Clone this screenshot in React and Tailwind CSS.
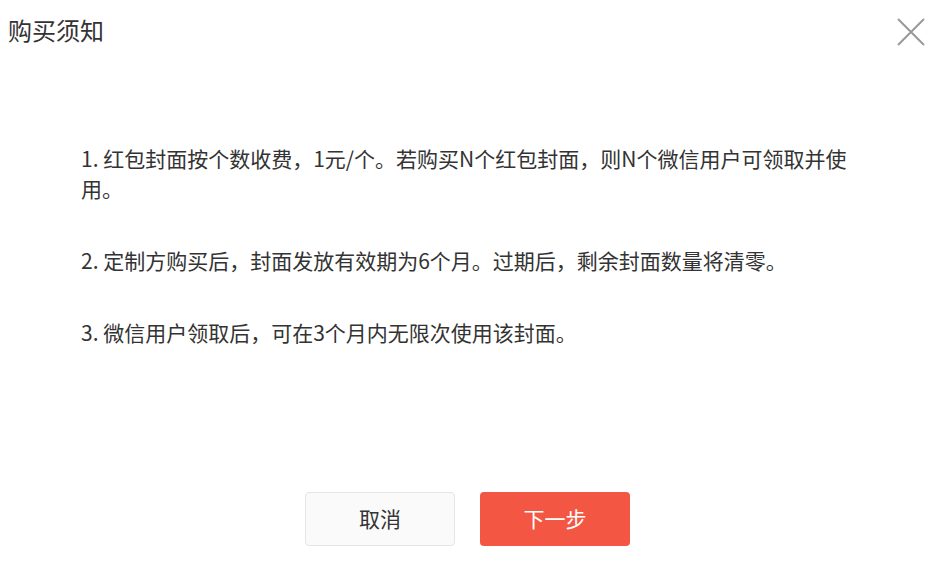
import React from 'react';

const items = [
    '1. 红包封面按个数收费，1元/个。若购买N个红包封面，则N个微信用户可领取并使用。',
    '2. 定制方购买后，封面发放有效期为6个月。过期后，剩余封面数量将清零。',
    '3. 微信用户领取后，可在3个月内无限次使用该封面。',
];

const CloseIcon = () => (
    <svg width="28" height="28" viewBox="0 0 28 28" fill="none">
        <path d="M1 1L27 27M27 1L1 27" stroke="#999999" strokeWidth="2" />
    </svg>
);

const App = () => {
    return (
        <div
            className="w-[952px] h-[567px] bg-white flex flex-col text-[#333333] overflow-hidden"
            style={{ fontFamily: '"Noto Sans CJK SC", "Noto Sans", sans-serif' }}
        >
            <div className="flex justify-between items-center pl-[8px] pr-[27px] pt-[17px] h-[46px]">
                <span className="text-[24px] leading-[30px] -mt-[3px]">购买须知</span>
                <CloseIcon />
            </div>
            <div className="pl-[81px] pt-[97px] w-[860px]">
                {items.map((text, i) => (
                    <p key={i} className="text-[21px] leading-[30px] mb-[42px]">{text}</p>
                ))}
            </div>
            <div className="flex justify-center gap-[25px] mt-auto mb-[21px] pr-[17px]">
                <button className="w-[150px] h-[54px] rounded-[4px] border border-[#e5e5e5] bg-[#fafafa] text-[21px] text-[#333333]">
                    取消
                </button>
                <button className="w-[150px] h-[54px] rounded-[4px] bg-[#f35744] text-[21px] text-white">
                    下一步
                </button>
            </div>
        </div>
    );
};

export default App;
